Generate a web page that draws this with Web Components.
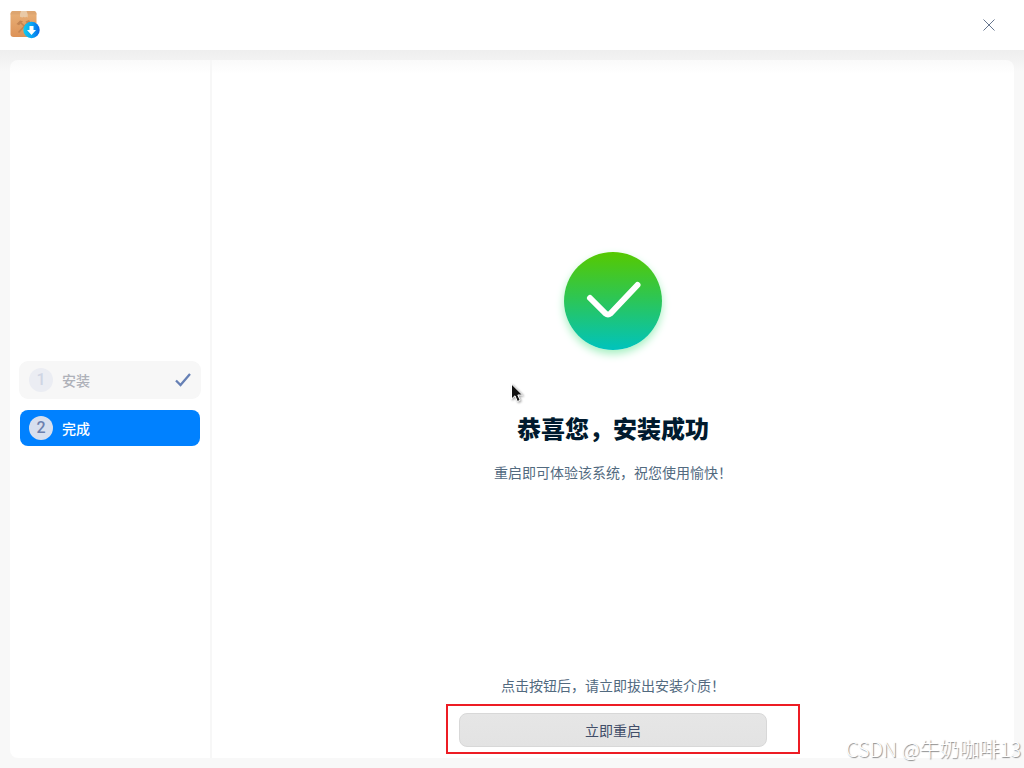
<!DOCTYPE html>
<html lang="zh-CN">
<head>
<meta charset="utf-8">
<title>安装器</title>
<style>
  html, body { height: 100%; }
  body { margin: 0; font-family: "Noto Sans CJK SC", sans-serif; font-size: 14px; line-height: 20px; color: #526a7f; overflow: hidden; }
</style>
</head>
<body>
<installer-app></installer-app>
<script>
  const define = (name, markup, setup) => {
    const template = document.createElement('template');
    template.innerHTML = markup;
    customElements.define(name, class extends HTMLElement {
      constructor() {
        super();
        this.attachShadow({ mode: 'open' }).append(template.content.cloneNode(true));
        if (setup) setup(this);
      }
    });
  };

  define('title-bar', `
    <style>
      :host { display: flex; flex: none; align-items: center; justify-content: space-between; height: 50px; padding: 0 20px 0 10px; box-sizing: border-box; background: #fff; }
      svg { display: block; }
      button { display: grid; place-items: center; width: 30px; height: 30px; padding: 0; border: 0; background: none; }
    </style>
    <svg width="30" height="30" viewBox="0 0 30 30" aria-hidden="true">
      <defs>
        <linearGradient id="box" x1="0" y1="0" x2="0" y2="1"><stop offset="0" stop-color="#e8b179"/><stop offset="1" stop-color="#dd9257"/></linearGradient>
        <linearGradient id="ball" x1="0" y1="0" x2="1" y2="0"><stop offset="0" stop-color="#12cbee"/><stop offset=".55" stop-color="#08a1f4"/><stop offset="1" stop-color="#0765e6"/></linearGradient>
      </defs>
      <rect x="0.5" y="1" width="26" height="26" rx="3" fill="url(#box)"/>
      <path d="M3 1h21q2 0 2.500 3.500H.5Q1 1 3 1z" fill="#dda570"/>
      <path d="M11 1h5.500l1.200 3.200V7.500l-1.400-.8-1.300.8-1.300-.8-1.300.8-2.400-.8V4z" fill="#e9c9a6"/>
      <path d="M11 13l9.500 9M17 13.500l-8.500 9" stroke="#c38452" stroke-width="1.600" fill="none"/>
      <path d="M6.500 14l3.500-3.500 3 .8-4 4zM15.500 11.500l3.500-1.500 2 3-2.500 2.500z" fill="#c38452"/>
      <circle cx="21.500" cy="20" r="8.200" fill="url(#ball)"/>
      <path d="M19.500 16h4v4H26l-4.500 5-4.500-5h2.500z" fill="#fff"/>
    </svg>
    <button type="button" aria-label="关闭">
      <svg width="12" height="12" viewBox="0 0 12 12"><path d="M.5.5l11 11M11.500.5l-11 11" stroke="#65758e" stroke-width="1"/></svg>
    </button>`);

  define('step-item', `
    <style>
      :host { display: flex; align-items: center; gap: 9px; height: 36px; padding: 0 9px; box-sizing: border-box; border-radius: 8px; }
      .num { display: grid; place-items: center; width: 24px; height: 24px; border-radius: 50%; font: 500 16px/24px Roboto, sans-serif; }
      .label { flex: 1; font-weight: 500; }
      svg { display: none; }
      :host([state="done"]) { background: #f7f7f7; box-shadow: 0 0 0 1px #f7f7f7; color: #aeb1b9; }
      :host([state="done"]) .num { background: #ebedf3; color: #cfd5e4; }
      :host([state="done"]) svg { display: block; }
      :host([state="current"]) { background: #0081ff; color: #fff; }
      :host([state="current"]) .num { background: #d7dfee; color: #6c80ae; }
    </style>
    <span class="num"><slot name="num"></slot></span>
    <span class="label"><slot></slot></span>
    <svg width="16" height="14" viewBox="0 0 16 14" aria-hidden="true"><path d="M1 7.500l4.500 4.500L15 1" fill="none" stroke="#6680b5" stroke-width="2.300"/></svg>`);

  define('step-list', `
    <style>
      :host { display: flex; flex: none; flex-direction: column; justify-content: center; gap: 12px; width: 202px; padding: 0 10px 10px; box-sizing: border-box; border-right: 2px solid #f7f7f7; }
    </style>
    <slot></slot>`);

  define('success-mark', `
    <style>
      :host { display: grid; place-items: center; width: 98px; height: 98px; border-radius: 50%; background: linear-gradient(#56c900, #2fc650 45%, #00c3bd); box-shadow: 0 4px 8px #a5f0c0; }
    </style>
    <svg width="98" height="98" viewBox="0 0 98 98" role="img" aria-label="成功">
      <path d="M26 46l15.500 15.500q2.500 2 5 0L73.500 33" fill="none" stroke="#fff" stroke-width="6" stroke-linecap="round" stroke-linejoin="round"/>
    </svg>`);

  define('restart-button', `
    <style>
      :host { display: block; position: relative; width: 308px; max-width: 100%; }
      button { display: block; width: 100%; height: 34px; padding: 0; border: 1px solid #d8d8d8; border-radius: 8px; background: linear-gradient(#e6e6e6, #e3e3e3); color: #414d68; font: inherit; }
      .frame { position: absolute; inset: -9px -33px -7px -13px; border: 2px solid #ed1c24; pointer-events: none; }
    </style>
    <button type="button"><slot></slot></button>
    <div class="frame"></div>`);

  define('finish-panel', `
    <style>
      :host { display: flex; flex-direction: column; flex: 1; align-items: center; padding-bottom: 11px; min-width: 0; }
      .result { flex: 1; display: flex; flex-direction: column; align-items: center; justify-content: center; }
      h1 { margin: 60px 0 16px; font-size: 24px; line-height: 36px; font-weight: 900; color: #001a2e; }
      p { margin: 0; }
      .note { margin: 2px 0 18px; }
    </style>
    <section class="result">
      <success-mark></success-mark>
      <h1>恭喜您，安装成功</h1>
      <p>重启即可体验该系统，祝您使用愉快！</p>
    </section>
    <p class="note">点击按钮后，请立即拔出安装介质！</p>
    <restart-button>立即重启</restart-button>`);

  define('mouse-pointer', `
    <style>:host { display: block; position: absolute; left: 510px; top: 383px; pointer-events: none; } svg { display: block; filter: drop-shadow(1px 1px 1px #0006); }</style>
    <svg width="15" height="22" viewBox="0 0 15 22" aria-hidden="true"><path d="M1.500 1v15l3.500-3.200 2.400 5.700 2.800-1.200-2.400-5.300h4.700z" fill="#111" stroke="#fff" stroke-width="1"/></svg>`);

  define('water-mark', `
    <style>:host { display: block; position: absolute; right: 3px; bottom: 5px; font-size: 20px; font-weight: 300; line-height: 28px; color: #fff; text-shadow: 1px 1px 1px #888; white-space: nowrap; pointer-events: none; }</style>
    <slot></slot>`);

  define('installer-app', `
    <style>
      :host { display: flex; flex-direction: column; position: relative; height: 100vh; }
      main { flex: 1; display: flex; padding: 10px; min-height: 0; background: linear-gradient(#eeeeee, #f8f8f8 22px); }
      .card { flex: 1; display: flex; border-radius: 8px; background: linear-gradient(#fafafa, #fff 14px); min-width: 0; }
    </style>
    <title-bar></title-bar>
    <main>
      <div class="card">
        <step-list>
          <step-item state="done"><span slot="num">1</span>安装</step-item>
          <step-item state="current"><span slot="num">2</span>完成</step-item>
        </step-list>
        <finish-panel></finish-panel>
      </div>
    </main>
    <mouse-pointer></mouse-pointer>
    <water-mark>CSDN @牛奶咖啡13</water-mark>`);
</script>
</body>
</html>
